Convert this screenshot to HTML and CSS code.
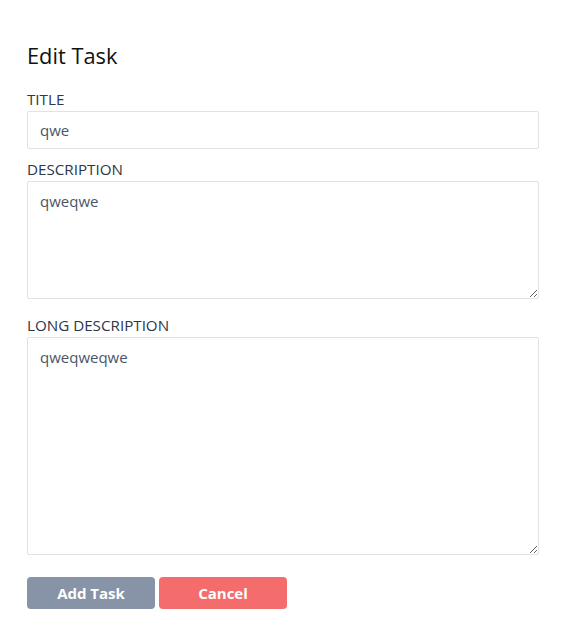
FILE: index.html
```html
<!DOCTYPE html>
<html>
<head>
<meta charset="utf-8">
<link rel="stylesheet" href="styles.css">
</head>
<body>
<div class="page">
  <h1 class="heading">Edit Task</h1>
  <form class="form">
    <label class="label" for="t">TITLE</label>
    <input class="field input" id="t" type="text" value="qwe">
    <label class="label" for="d">DESCRIPTION</label>
    <textarea class="field area area-short" id="d">qweqwe</textarea>
    <label class="label" for="l">LONG DESCRIPTION</label>
    <textarea class="field area area-long" id="l">qweqweqwe</textarea>
    <div class="actions">
      <button type="button" class="btn btn-add">Add Task</button>
      <button type="button" class="btn btn-cancel">Cancel</button>
    </div>
  </form>
</div>
</body>
</html>
```
FILE: styles.css
```css
* { box-sizing: border-box; }
html, body { margin: 0; background: #fff; }
body { font-family: "Open Sans", "Noto Sans", sans-serif; }
.page { padding: 40px 27px 0 27px; }
.heading {
  margin: 0 0 18px 0;
  font-size: 21.8px;
  font-weight: 400;
  color: #111;
  line-height: 32px;
}
.form { display: flex; flex-direction: column; }
.label {
  font-size: 15.2px;
  color: #2d3748;
  line-height: 18px;
  margin-bottom: 3px;
}
.field {
  width: 100%;
  border: 1px solid #e2e2e6;
  border-radius: 2px;
  font-family: inherit;
  font-size: 15px;
  color: #4a5568;
  background: #fff;
  outline: none;
}
.input { height: 38px; padding: 0 12px; margin-bottom: 11px; }
.area { padding: 8px 12px; resize: vertical; line-height: 22px; display: block; }
.area-short { height: 118px; margin-bottom: 17px; }
.area-long { height: 218px; margin-bottom: 22px; }
.actions { display: flex; gap: 4px; }
.btn {
  width: 128px;
  height: 32px;
  border: none;
  border-radius: 4px;
  color: #fff;
  font-family: inherit;
  font-weight: 700;
  font-size: 15px;
}
.btn-add { background: #8793a6; }
.btn-cancel { background: #f56c6c; }
```
